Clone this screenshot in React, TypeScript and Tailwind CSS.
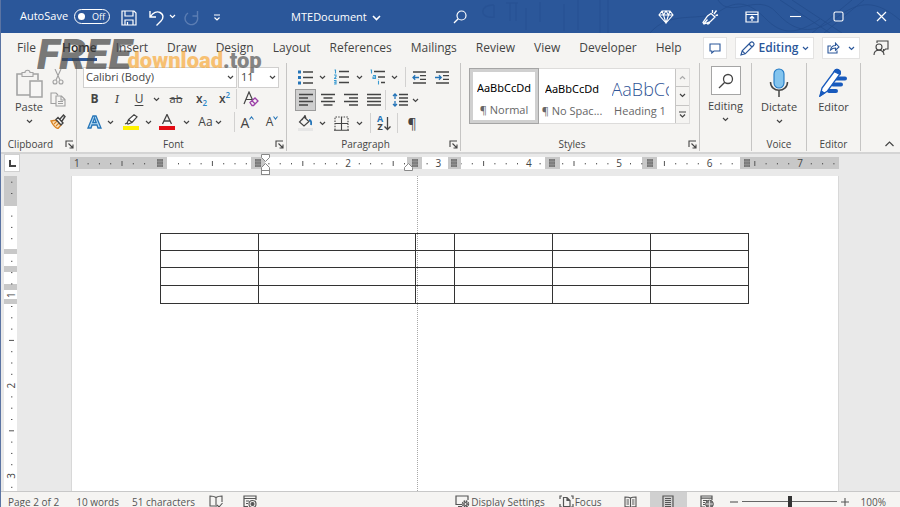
import type { ReactNode } from 'react';
import clsx from 'clsx';

const TABS = [
  'File', 'Home', 'Insert', 'Draw', 'Design', 'Layout', 'References',
  'Mailings', 'Review', 'View', 'Developer', 'Help',
];

const STYLES = [
  { sample: 'AaBbCcDd', name: '¶ Normal', selected: true },
  { sample: 'AaBbCcDd', name: '¶ No Spac...' },
  { sample: 'AaBbCc', name: 'Heading 1', heading: true },
];

const COLUMN_WIDTHS = [98, 157, 39, 98, 98, 98];
const ROW_HEIGHTS = [17, 17, 18, 18];

const INCH = 90.4;

interface IconProps {
  w: number;
  h: number;
  children: ReactNode;
  className?: string;
}

function Icon({ w, h, children, className }: IconProps) {
  return (
    <svg
      width={w}
      height={h}
      viewBox={`0 0 ${w} ${h}`}
      fill="none"
      stroke="currentColor"
      strokeWidth={1.1}
      className={clsx('shrink-0', className)}
      aria-hidden="true"
    >
      {children}
    </svg>
  );
}

function Chevron({ className }: { className?: string }) {
  return (
    <Icon w={7} h={5} className={className}>
      <path d="M1 1l2.500 2.500L6 1" strokeWidth={1.2} />
    </Icon>
  );
}

interface ToolProps {
  label: string;
  className: string;
  children: ReactNode;
}

function Tool({ label, className, children }: ToolProps) {
  return (
    <button
      type="button"
      aria-label={label}
      className={clsx('flex h-[22px] shrink-0 items-center justify-center', className)}
    >
      {children}
    </button>
  );
}

function Divider() {
  return <div className="h-5 w-px shrink-0 bg-[#d2d1d0]" />;
}

interface GroupProps {
  label: string;
  className: string;
  launcher?: boolean;
  children: ReactNode;
}

function Group({ label, className, launcher, children }: GroupProps) {
  return (
    <section
      aria-label={label || 'Editing'}
      className={clsx('flex shrink-0 flex-col border-r border-[#c6c5c4]', className)}
    >
      <div className="h-[74px]">{children}</div>
      <div
        className={clsx(
          'relative flex h-[14px] items-center justify-center text-[10px] leading-[14px]',
          launcher && 'pr-4',
        )}
      >
        {label}
        {launcher && (
          <button type="button" aria-label={`${label} settings`} className="absolute right-[2px]">
            <Icon w={9} h={9}>
              <path d="M1 7V1h7M3.500 3.500L8 8M8 4.500V8H4.500" />
            </Icon>
          </button>
        )}
      </div>
    </section>
  );
}

function TitleBar() {
  return (
    <header className="relative flex h-[33px] shrink-0 items-center overflow-hidden bg-[#2b579a] text-[11px] text-white">
      <svg className="absolute right-0 top-0 h-full w-[420px]" viewBox="0 0 420 33" fill="none" stroke="#234c8c" strokeWidth="2" aria-hidden="true">
        <path d="M14 5c-14-1-16 14 0 12V5M26 3h12M30 3v18M36 3v18M46 8v22M60 2v20M84 4v27M98 0v30M120 0v33M128 0v33" strokeWidth="1.500" opacity=".4" />
        <path d="M238 0c12 20 40-8 58 12s36 24 60 6 40-18 64 2M170 33c20-24 52-10 70-22s30-8 46 8 30 16 54 0M300 0l50 33M312 0l50 33M372 0l-40 33M384 0l-40 33" strokeWidth="1" opacity=".8" />
      </svg>
      <label className="relative ml-[19px] flex items-center gap-[6px]">
        AutoSave
        <input type="checkbox" className="peer sr-only" />
        <span className="flex h-[15px] w-9 items-center gap-[7px] rounded-full border border-white pl-[3px] text-[9px]">
          <span className="size-[7px] rounded-full bg-white" />
          Off
        </span>
      </label>
      <button type="button" aria-label="Save" className="relative ml-[11px] mt-[2px]">
        <Icon w={16} h={16}>
          <path d="M1 1h12l2 2v12H1zM4 1v5h8V1M4 15v-5h8v5M6.500 12v3" strokeWidth={1.2} />
        </Icon>
      </button>
      <button type="button" aria-label="Undo" className="relative ml-3 mt-[2px]">
        <Icon w={15} h={16}>
          <path d="M1 1v6h6M1.500 6.500C4 2.500 8 1 11 2.500c4 2 3.500 6 1 8.500l-4.500 4.500" strokeWidth={1.4} />
        </Icon>
      </button>
      <button type="button" aria-label="Undo history" className="relative ml-[5px]">
        <Chevron />
      </button>
      <button type="button" aria-label="Redo" disabled className="relative ml-2 mt-[2px] text-[#5b7db3]">
        <Icon w={16} h={16}>
          <path d="M13.500 1v5h-5M13 5.500A6.300 6.300 0 1 1 4 3" strokeWidth={1.4} />
        </Icon>
      </button>
      <button type="button" aria-label="Customize Quick Access Toolbar" className="relative ml-[13px] mt-[2px]">
        <Icon w={8} h={8}>
          <path d="M1 1h6M1.500 3.500L4 6l2.500-2.500" strokeWidth={1.2} />
        </Icon>
      </button>
      <button type="button" className="relative ml-[70px] mt-[2px] flex items-center gap-[5px]">
        MTEDocument
        <Icon w={9} h={6}>
          <path d="M1 1l3.500 3.500L8 1" strokeWidth={1.6} />
        </Icon>
      </button>
      <button type="button" aria-label="Search" className="relative ml-[72px]">
        <Icon w={14} h={14}>
          <circle cx="8.500" cy="5.500" r="4.500" strokeWidth={1.2} />
          <path d="M5.200 8.800L1 13" strokeWidth={1.3} />
        </Icon>
      </button>
      <div className="relative ml-auto flex items-center pr-[13px]">
        <button type="button" aria-label="Premium">
          <Icon w={16} h={14}>
            <path d="M4 1h8l3 4-7 8-7-8zM1 5h14M4 1l1.500 4L8 13l2.500-8L12 1M5.500 5L8 1l2.500 4" />
          </Icon>
        </button>
        <button type="button" aria-label="Coming soon" className="ml-7">
          <Icon w={17} h={16}>
            <path d="M9 4.500l4 3.500-4.500 4.500L2 15l-1-1.500L5.500 7zM2 14.500l3.500-4M5 14c0 1.500 2.500 1.500 3-1.500M10.500 4V1M12 5l2.500-3.500M13.500 6.500L16 6" strokeWidth={1.3} />
          </Icon>
        </button>
        <button type="button" aria-label="Ribbon display options" className="ml-[26px]">
          <Icon w={14} h={12}>
            <path d="M1 1h12v10H1zM1 3.500h12M7 10V5.500M4.800 7.500L7 5.300l2.200 2.200" strokeWidth={1.2} />
          </Icon>
        </button>
        <button type="button" aria-label="Minimize" className="ml-[31px]">
          <Icon w={11} h={11}>
            <path d="M0 5.500h11" />
          </Icon>
        </button>
        <button type="button" aria-label="Maximize" className="ml-8">
          <Icon w={11} h={11}>
            <rect x="1" y="1" width="9" height="9" rx="1.500" />
          </Icon>
        </button>
        <button type="button" aria-label="Close" className="ml-8">
          <Icon w={11} h={11}>
            <path d="M1 1l9 9M10 1l-9 9" strokeWidth={1.2} />
          </Icon>
        </button>
      </div>
    </header>
  );
}

function TabRow() {
  return (
    <div className="flex h-[30px] shrink-0 items-center">
      <nav className="flex pl-[7px] text-[12px]">
        {TABS.map((tab) => (
          <a
            key={tab}
            href={`#${tab.toLowerCase()}`}
            className={clsx('flex flex-col pt-[3px] pr-[10px] pl-[9px]', tab === 'File' && 'mr-[7px]')}
          >
            <span
              className={clsx(
                'border-b-3 leading-[20px]',
                tab === 'Home' ? 'border-[#2b579a] font-semibold text-[#262626]' : 'border-transparent',
              )}
            >
              {tab}
            </span>
          </a>
        ))}
      </nav>
      <div className="ml-auto flex items-center pr-[11px] text-[#2b579a]">
        <button type="button" aria-label="Comments" className="flex h-[22px] w-6 items-center justify-center border border-[#e4e3e2] bg-white">
          <Icon w={12} h={11}>
            <path d="M1 1h10v7H5L2.800 10V8H1z" />
          </Icon>
        </button>
        <button type="button" className="ml-2 flex h-[22px] w-[79px] items-center justify-center gap-1 border border-[#e4e3e2] bg-white text-[12px] font-semibold">
          <Icon w={15} h={15}>
            <path d="M1 14l1.200-4.200L10.500 1.500c2-1.500 4.500 1 3 3L5.200 12.800zM9 3l3 3M2.200 9.800l3 3" strokeWidth={1.2} />
          </Icon>
          Editing
          <Chevron />
        </button>
        <button type="button" aria-label="Share" className="ml-2 flex h-[22px] w-[38px] items-center justify-center gap-2 border border-[#e4e3e2] bg-white">
          <Icon w={13} h={12}>
            <path d="M4 4H1v7h9V8.500M3.500 8c.500-3 2.500-4.500 5-4.500V1.200L12 5 8.500 8.200V6C6.500 6 5 6.500 3.500 8z" />
          </Icon>
          <Chevron />
        </button>
        <button type="button" aria-label="Account" className="ml-[13px] text-[#444]">
          <Icon w={16} h={16}>
            <circle cx="6" cy="7" r="3" />
            <path d="M1 15c0-3 2-4.800 5-4.800S11 12 11 15M4 3V1h11v8h-2.500L10.500 11V9" />
          </Icon>
        </button>
      </div>
    </div>
  );
}

function ClipboardGroup() {
  return (
    <Group label="Clipboard" launcher className="w-[76px]">
      <div className="flex justify-between pl-[14px] pr-2">
        <button type="button" className="flex w-7 flex-col items-center pt-[6px] text-[11px] leading-[18px]">
          <Icon w={27} h={29} className="text-[#a3a3a3]">
            <path d="M14 26H1V5h6M17 5h5v6" strokeWidth={1.6} />
            <path d="M6 3.500h3c0-3 5-3 5 0h3v4H6z" fill="#f1f0ef" />
            <rect x="14" y="12" width="12" height="16" fill="#f7f6f5" strokeWidth={1.5} />
          </Icon>
          Paste
          <Chevron className="mt-[3px]" />
        </button>
        <div className="flex flex-col items-center pt-[3px]">
          <Tool label="Cut" className="w-5">
            <Icon w={12} h={16} className="text-[#a0a0a0]">
              <path d="M3 0l5 11M9 0L4 11" />
              <circle cx="3" cy="13" r="2" />
              <circle cx="9" cy="13" r="2" />
            </Icon>
          </Tool>
          <Tool label="Copy" className="w-5">
            <Icon w={16} h={15} className="text-[#a0a0a0]">
              <path d="M6 11.500H1V1h5l2 2M6 4h5.500L15 7.500V14H6zM11 4v4h4M8 9.500h5M8 11.500h5" />
            </Icon>
          </Tool>
          <Tool label="Format Painter" className="w-5">
            <Icon w={16} h={15}>
              <path d="M1 7l6-1 4 5-3 3.500C5 14 3 11 1 7z" fill="#fce4c0" stroke="#d98324" strokeWidth={1.4} />
              <path d="M4 10l3-3M6 12l3-3" stroke="#d98324" />
              <path d="M6 5.500l2-2 5 5.500-2 2zM10 5l3.500-4L15 2.500 12 7" fill="#fff" strokeWidth={1.4} />
            </Icon>
          </Tool>
        </div>
      </div>
    </Group>
  );
}

function FontGroup() {
  return (
    <Group label="Font" launcher className="w-[210px]">
      <div className="flex flex-col pl-[6px] pt-1">
        <div className="flex h-[21px] gap-px">
          <button type="button" aria-label="Font name" className="flex h-[21px] w-[154px] items-center justify-between border border-[#d0cfce] bg-white px-[2px] text-[11px]">
            Calibri (Body)
            <Chevron />
          </button>
          <button type="button" aria-label="Font size" className="flex h-[21px] w-[41px] items-center justify-between border border-[#d0cfce] bg-white px-[2px] text-[11px]">
            11
            <Chevron />
          </button>
        </div>
        <div className="flex items-center text-[12px]">
          <Tool label="Bold" className="w-[23px] font-bold">B</Tool>
          <Tool label="Italic" className="w-[22px] font-serif text-[13px] italic">I</Tool>
          <Tool label="Underline" className="w-[22px] underline underline-offset-2">U</Tool>
          <Tool label="Underline style" className="w-3"><Chevron /></Tool>
          <Tool label="Strikethrough" className="w-7 text-[11px] line-through">ab</Tool>
          <Tool label="Subscript" className="w-[23px] font-semibold">
            x<span className="mt-2 text-[8px] leading-[8px] text-[#2b88c8]">2</span>
          </Tool>
          <Tool label="Superscript" className="w-[23px] font-semibold">
            x<span className="mb-2 text-[8px] leading-[8px] text-[#2b88c8]">2</span>
          </Tool>
          <Divider />
          <Tool label="Clear formatting" className="w-7">
            <Icon w={16} h={16}>
              <path d="M1 13L6 1l4 9M3 8.500h6" strokeWidth={1.2} />
              <path d="M7 11.500L12 7l3 3-4.500 4.500H9zM9 9.700l3 3" stroke="#9b3fa8" strokeWidth={1.3} fill="#f5f4f2" />
            </Icon>
          </Tool>
        </div>
        <div className="flex items-center pt-px">
          <Tool label="Text effects" className="w-[23px]">
            <Icon w={15} h={14}>
              <path d="M1 13L6 1h3l5 12h-3l-1-3H5l-1 3zM5.800 7.500h3.400L7.500 3z" stroke="#2474b8" strokeWidth={1.3} fill="#b9dcf3" />
            </Icon>
          </Tool>
          <Tool label="Text effects options" className="w-2"><Chevron /></Tool>
          <Tool label="Highlight color" className="w-[34px]">
            <Icon w={16} h={16}>
              <path d="M4 9.500l1.500-4L11 .800l3 2L9 8.500 5 10zM5.500 5.500L9 8.500" fill="#fff" strokeWidth={1.200} />
              <path d="M2 10l2-1" />
              <rect x="0" y="12" width="16" height="4" fill="#fff200" stroke="none" />
            </Icon>
          </Tool>
          <Tool label="Highlight options" className="w-0"><Chevron /></Tool>
          <Tool label="Font color" className="w-[38px]">
            <Icon w={16} h={16}>
              <path d="M3.500 10L8 .500l4.500 9.500M5 7h6" strokeWidth={1.3} />
              <rect x="0" y="12" width="16" height="4" fill="#e30b13" stroke="none" />
            </Icon>
          </Tool>
          <Tool label="Font color options" className="w-0"><Chevron /></Tool>
          <Tool label="Change case" className="w-12 gap-[2px] text-[12px]">
            Aa <Chevron />
          </Tool>
          <Divider />
          <Tool label="Grow font" className="w-[25px] text-[14px]">
            A
            <Icon w={5} h={4} className="mb-2 text-[#2474b8]">
              <path d="M.500 3.500l2-2.500 2 2.500" />
            </Icon>
          </Tool>
          <Tool label="Shrink font" className="w-6 text-[12px]">
            A
            <Icon w={5} h={4} className="mb-2 text-[#2474b8]">
              <path d="M.500 .500l2 2.500 2-2.500" />
            </Icon>
          </Tool>
        </div>
      </div>
    </Group>
  );
}

function ParagraphGroup() {
  return (
    <Group label="Paragraph" launcher className="w-[174px]">
      <div className="flex flex-col gap-px pl-2 pt-[3px] text-[#444]">
        <div className="flex items-center">
          <Tool label="Bullets" className="w-[21px]">
            <Icon w={15} h={15}>
              <path d="M5 2h10M5 7.500h10M5 13h10" strokeWidth={1.3} />
              <path d="M0 2h3M0 7.500h3M0 13h3" stroke="#2474b8" strokeWidth={3} />
            </Icon>
          </Tool>
          <Tool label="Bullet library" className="w-3"><Chevron /></Tool>
          <Tool label="Numbering" className="w-[26px]">
            <Icon w={15} h={16}>
              <path d="M5 2.500h10M5 8h10M5 13.500h10" strokeWidth={1.3} />
              <path d="M.500 1h1v3.500M0 6h2v1.500L.500 9.500H2.500M0 11.500h2v3.500H0M0 13.200h2" stroke="#3a9bd2" />
            </Icon>
          </Tool>
          <Tool label="Numbering library" className="w-[10px]"><Chevron /></Tool>
          <Tool label="Multilevel list" className="w-[26px]">
            <Icon w={15} h={16}>
              <path d="M4 2.500h11M8 8h7M11 13.500h4" strokeWidth={1.3} />
              <path d="M.500 1h1v3.500M3 6.500h2.500v3H3V8h2.500M8.500 12v3.500M8.500 10.500v.800" stroke="#3a9bd2" />
            </Icon>
          </Tool>
          <Tool label="List library" className="w-2"><Chevron /></Tool>
          <div className="w-[7px]" />
          <Divider />
          <Tool label="Decrease indent" className="w-[26px]">
            <Icon w={15} h={13}>
              <path d="M1 1h13M8 4.700h6M8 8.300h6M1 12h13" strokeWidth={1.3} />
              <path d="M7 6.500H1M3.200 4.200L1 6.500l2.200 2.300" stroke="#2474b8" strokeWidth={1.300} />
            </Icon>
          </Tool>
          <Tool label="Increase indent" className="w-5">
            <Icon w={15} h={13}>
              <path d="M1 1h13M8 4.700h6M8 8.300h6M1 12h13" strokeWidth={1.3} />
              <path d="M0 6.500h6M4 4.200l2.200 2.300L4 8.800" stroke="#2474b8" strokeWidth={1.300} />
            </Icon>
          </Tool>
        </div>
        <div className="flex items-center">
          <Tool label="Align left" className="w-[21px] border border-[#9b9b9b] bg-[#cfcfcf]">
            <Icon w={14} h={14}>
              <path d="M0 1.500h14M0 5h9M0 8.500h14M0 12h9" strokeWidth={1.4} />
            </Icon>
          </Tool>
          <Tool label="Center" className="w-[23px]">
            <Icon w={14} h={14}>
              <path d="M0 1.500h14M2.500 5h9M0 8.500h14M2.500 12h9" strokeWidth={1.3} />
            </Icon>
          </Tool>
          <Tool label="Align right" className="w-[23px]">
            <Icon w={14} h={14}>
              <path d="M0 1.500h14M5 5h9M0 8.500h14M5 12h9" strokeWidth={1.3} />
            </Icon>
          </Tool>
          <Tool label="Justify" className="w-[23px]">
            <Icon w={14} h={14}>
              <path d="M0 1.500h14M0 5h14M0 8.500h14M0 12h14" strokeWidth={1.3} />
            </Icon>
          </Tool>
          <Divider />
          <Tool label="Line spacing" className="w-[35px] gap-1 pl-1">
            <Icon w={16} h={14}>
              <path d="M7 1.500h9M7 5h9M7 8.500h9M7 12h9" strokeWidth={1.3} />
              <path d="M3 1v5M1 3l2-2 2 2M3 8v5M1 11l2 2 2-2" stroke="#2474b8" strokeWidth={1.300} />
            </Icon>
            <Chevron />
          </Tool>
        </div>
        <div className="flex items-center">
          <Tool label="Shading" className="w-[21px]">
            <Icon w={15} h={16}>
              <path d="M6 2l5 4.500L6 11 1.500 7zM4 5l3-4.500 1 3" strokeWidth={1.2} />
              <path d="M11 5c2 0 2.500 2 2 5" stroke="#2474b8" strokeWidth={1.800} />
              <rect x="0" y="13" width="15" height="3" fill="#e6e6e6" stroke="none" />
            </Icon>
          </Tool>
          <Tool label="Shading color" className="w-3"><Chevron /></Tool>
          <Tool label="Borders" className="w-[26px]">
            <Icon w={15} h={15}>
              <path d="M1 14V1h13v13" strokeDasharray="1.500 1.200" />
              <path d="M0 14.300h15M7.500 1v13M1 7.500h13" />
            </Icon>
          </Tool>
          <Tool label="Border options" className="w-[10px]"><Chevron /></Tool>
          <div className="w-[6px]" />
          <Divider />
          <Tool label="Sort" className="w-[26px]">
            <span className="flex flex-col text-[9px] leading-[8px] font-bold">
              <span className="text-[#2474b8]">A</span>
              <span>Z</span>
            </span>
            <Icon w={8} h={15}>
              <path d="M4.500 1v12.500M1.500 10.500l3 3 3-3" strokeWidth={1.300} />
            </Icon>
          </Tool>
          <Divider />
          <Tool label="Show paragraph marks" className="w-7 text-[14px]">¶</Tool>
        </div>
      </div>
    </Group>
  );
}

function StylesGroup() {
  return (
    <Group label="Styles" launcher className="w-[239px]">
      <div className="pl-[8px] pt-[5px]">
        <div className="flex h-14 w-[221px] border border-[#dddcdb] bg-white">
          {STYLES.map((style) => (
            <button
              key={style.name}
              type="button"
              className={clsx(
                'flex w-[68px] flex-col items-center justify-end overflow-hidden',
                style.selected && 'border-3 border-[#d0d0d0] outline outline-[#a5a5a5]',
              )}
            >
              <span
                className={clsx(
                  'flex h-[24px] items-center overflow-hidden whitespace-nowrap',
                  style.heading
                    ? 'w-[57px] text-[18px] leading-[24px] font-light text-[#2f5496]'
                    : "justify-center font-['Noto_Sans'] text-[11px] text-black",
                )}
              >
                {style.sample}
              </span>
              <span className={clsx('text-[11px] leading-[20px] whitespace-nowrap text-[#666]', !style.selected && 'mb-[2px]')}>
                {style.name}
              </span>
            </button>
          ))}
          <div className="ml-auto flex w-[14px] flex-col divide-y divide-[#c6c5c4] border-l border-[#c6c5c4] bg-[#f5f4f2]">
            <button type="button" aria-label="Previous styles" className="flex flex-1 items-center justify-center text-[#aaa]">
              <Chevron className="rotate-180" />
            </button>
            <button type="button" aria-label="Next styles" className="flex flex-1 items-center justify-center">
              <Chevron />
            </button>
            <button type="button" aria-label="More styles" className="flex flex-1 items-center justify-center">
              <Icon w={7} h={7}>
                <path d="M0 1h7M1 3.500l2.500 2.500L6 3.500" strokeWidth={1.200} />
              </Icon>
            </button>
          </div>
        </div>
      </div>
    </Group>
  );
}

function Ribbon() {
  return (
    <div className="flex h-[89px] shrink-0 overflow-hidden pb-px">
      <ClipboardGroup />
      <FontGroup />
      <ParagraphGroup />
      <StylesGroup />
      <Group label="" className="w-[52px]">
        <button type="button" className="flex w-full flex-col items-center pt-[3px] text-[11px] leading-[22px]">
          <span className="flex h-[29px] w-[30px] items-center justify-center border border-[#a5a5a5] bg-white">
            <Icon w={16} h={16}>
              <circle cx="10" cy="6" r="4.500" strokeWidth={1.300} />
              <path d="M6.800 9.200L1 15" strokeWidth={1.300} />
            </Icon>
          </span>
          Editing
          <Chevron />
        </button>
      </Group>
      <Group label="Voice" className="w-[55px]">
        <button type="button" className="flex w-full flex-col items-center pt-[5px] text-[11px] leading-[20px]">
          <Icon w={20} h={29}>
            <rect x="5" y="1" width="10" height="19" rx="5" fill="#83c4ee" stroke="#1f78c4" />
            <path d="M1.500 14c0 11 17 11 17 0M10 22.500V29" strokeWidth={1.500} />
          </Icon>
          Dictate
          <Chevron className="mt-[2px]" />
        </button>
      </Group>
      <Group label="Editor" className="w-[54px]">
        <button type="button" className="flex w-full flex-col items-center pt-[5px] text-[11px] leading-[20px]">
          <Icon w={29} h={29}>
            <path d="M17 10.500h9M14 16.500h8M10 23h7" stroke="#185abd" strokeWidth={4} strokeLinecap="round" />
            <path d="M1 28l2-8L16 2.500c2-2.500 6.500 0 5 3.500L8.500 23z" fill="#fff" stroke="#185abd" strokeWidth={1.300} />
            <path d="M15 3.500C17-1 23 2 21 6.500zM1 28l1.500-5 3 2z" fill="#185abd" stroke="#185abd" />
          </Icon>
          Editor
        </button>
      </Group>
      <div className="flex flex-1 items-end justify-end pr-[6px] pb-1">
        <button type="button" aria-label="Collapse the ribbon">
          <Icon w={9} h={6}>
            <path d="M.500 5l4-4 4 4" strokeWidth={1.200} />
          </Icon>
        </button>
      </div>
    </div>
  );
}

/* Ruler coordinates run from the left end of the grey margin strip. */
function HorizontalRuler() {
  const zero = 97.2;
  const white = [[97, 84], [194, 143], [352, 26], [391, 84], [490, 82], [587, 83]];
  const stops = [87, 185, 342, 381, 479, 577, 674];
  const ticks = Array.from({ length: 67 }, (_, i) => i - 7)
    .filter((i) => i % 8 !== 0)
    .map((i) => ({ x: zero + (i * INCH) / 8, half: i % 4 === 0 }));
  const numbers = [-1, 2, 3, 4, 5, 6, 7];

  return (
    <svg className="block w-full" height="24" viewBox="0 1 769 24" preserveAspectRatio="xMinYMin slice" aria-label="Horizontal ruler">
      <rect x="0" y="4" width="769" height="12" fill="#c8c8c8" />
      {white.map(([x, w]) => (
        <rect key={x} x={x} y="4" width={w} height="12" fill="#fff" />
      ))}
      {ticks.map(({ x, half }) => (
        <rect key={x} x={x - 0.5} y={half ? 8 : 10} width="1" height={half ? 5 : 1.4} fill="#555" />
      ))}
      {numbers.map((n) => (
        <text key={n} x={zero + n * INCH} y="14" textAnchor="middle" fontSize="10" fill="#444">
          {Math.abs(n)}
        </text>
      ))}
      {stops.map((x) => (
        <g key={x}>
          <rect x={x - 3} y="4" width="13" height="12" fill="#c8c8c8" />
          <rect x={x} y="6" width="6" height="8" fill="#777" />
          <path d={`M${x + 2} 6v8M${x + 4} 6v8M${x} 8.500h6M${x} 11.500h6`} stroke="#999" strokeWidth=".600" />
        </g>
      ))}
      <g fill="#fff" stroke="#888">
        <path d="M191.500 1.500h8v3l-4 4-4-4zM191.500 17.500v-3l4-4 4 4v3z" />
        <rect x="191.500" y="17.500" width="8" height="4" />
        <path d="M334.500 17.500v-3l4-4 4 4v3z" />
      </g>
    </svg>
  );
}

function VerticalRuler() {
  const zero = 28.8;
  const grey = [[0, 30], [73, 5], [90, 6], [108, 6], [123, 5]];
  const ticks = Array.from({ length: 28 }, (_, i) => i - 2)
    .filter((i) => i % 8 !== 0 && i !== 4)
    .map((i) => ({ y: zero + (i * INCH) / 8, half: i % 4 === 0 }));

  return (
    <svg className="block" width="13" height="100%" aria-label="Vertical ruler">
      <rect width="13" height="100%" fill="#fff" />
      {grey.map(([y, h]) => (
        <rect key={y} x="0" y={y} width="13" height={h} fill="#c8c8c8" />
      ))}
      {ticks.map(({ y, half }) => (
        <rect key={y} x={half ? 5 : 7} y={y - 0.5} width={half ? 5 : 1.4} height="1" fill="#555" />
      ))}
      {[1, 2, 3].map((n) => (
        <text
          key={n}
          transform={`translate(11 ${zero + n * INCH}) rotate(-90)`}
          textAnchor="middle"
          fontSize="10"
          fill="#444"
        >
          {n}
        </text>
      ))}
    </svg>
  );
}

function Workspace() {
  return (
    <main className="flex min-h-0 flex-1 border-t-2 border-[#d4d4d4] bg-[#e9e9e9]">
      <div className="flex w-[17px] shrink-0 flex-col pl-[3px]">
        <button type="button" aria-label="Tab selector" className="mb-1 flex h-[18px] w-4 shrink-0 items-center justify-center border border-[#d0d0d0] bg-white">
          <Icon w={7} h={7} className="text-[#444]">
            <path d="M1 0v6h6" strokeWidth={2} />
          </Icon>
        </button>
        <div className="min-h-0 flex-1">
          <VerticalRuler />
        </div>
      </div>
      <div className="mr-[61px] ml-[52px] flex min-w-0 flex-1 flex-col">
        <div className="h-[22px] shrink-0">
          <HorizontalRuler />
        </div>
        <article className="relative ml-px min-h-0 flex-1 border-r border-l border-[#d8d8d8] bg-white pt-[57px] pl-[88px]">
          <div className="absolute inset-y-0 left-[345px] border-l border-dotted border-[#a8a8a8]" />
          <table className="relative table-fixed border-collapse">
            <colgroup>
              {COLUMN_WIDTHS.map((width, i) => (
                <col key={i} style={{ width }} />
              ))}
            </colgroup>
            <tbody>
              {ROW_HEIGHTS.map((height, r) => (
                <tr key={r} style={{ height }}>
                  {COLUMN_WIDTHS.map((_, c) => (
                    <td key={c} className="border border-[#333] p-0" />
                  ))}
                </tr>
              ))}
            </tbody>
          </table>
        </article>
      </div>
    </main>
  );
}

function StatusBar() {
  return (
    <footer className="flex h-4 shrink-0 border-t border-[#c8c8c8] text-[10px] leading-[10px] text-[#555]">
      <div className="flex h-[19px] flex-1 items-center pl-[7px]">
        <span>Page 2 of 2</span>
        <span className="ml-[17px]">10 words</span>
        <span className="ml-[13px]">51 characters</span>
        <button type="button" aria-label="Proofing" className="ml-[14px]">
          <Icon w={14} h={13}>
            <path d="M7 2.500C5 1 3 1 1 1v10h5M7 2.500C9 1 11 1 13 1v6M7 2.500V12M8 10l2 2 3.500-4" strokeWidth={1.100} />
          </Icon>
        </button>
        <button type="button" aria-label="Record macro" className="ml-5">
          <Icon w={14} h={13}>
            <path d="M5 11.500H1V1h12v4M1 3.500h12M3 6h3M3 8.500h2" strokeWidth={1.200} />
            <circle cx="9.500" cy="9" r="3.500" />
            <circle cx="9.500" cy="9" r="1.500" fill="currentColor" />
          </Icon>
        </button>
        <button type="button" className="ml-auto flex items-center gap-px">
          <Icon w={15} h={13}>
            <path d="M7 9.500H1V1h12v4M3 11.500h4" strokeWidth={1.200} />
            <circle cx="10.500" cy="9" r="2.800" strokeWidth={1.800} strokeDasharray="1.500 .700" />
            <circle cx="10.500" cy="9" r="1.500" />
          </Icon>
          Display Settings
        </button>
        <button type="button" className="ml-[14px] flex items-center gap-px">
          <Icon w={15} h={13}>
            <path d="M1 4V1h2M12 1h2v3M1 9v3h2M14 9v3h-2M4.500 2.500H8L11 5.500v6H4.500zM8 2.500v3h3" strokeWidth={1.200} />
          </Icon>
          Focus
        </button>
        <button type="button" aria-label="Read mode" className="ml-[22px]">
          <Icon w={13} h={12}>
            <path d="M6.500 2C5 1 3 1 1 1v9.500c2 0 4 0 5.500 1 1.500-1 3.500-1 5.500-1V1c-2 0-4 0-5.500 1zv9.500M2.500 4H5M2.500 6H5M2.500 8H5M8 4h2.500M8 6h2.500M8 8h2.500" />
          </Icon>
        </button>
        <button type="button" aria-label="Print layout" className="ml-[13px] flex h-full w-[37px] items-center justify-center bg-[#d0d0d0]">
          <Icon w={12} h={13}>
            <path d="M1 1h10v12H1zM3 3.500h6M3 5.500h6M3 7.500h6M3 9.500h6M3 11.500h6" strokeWidth={1.200} />
          </Icon>
        </button>
        <button type="button" aria-label="Web layout" className="ml-[13px]">
          <Icon w={14} h={13}>
            <path d="M5 12H1V1h11v4M1 3.200h11M3 5.500h4M3 7.500h2M3 9.500h2" strokeWidth={1.200} />
            <circle cx="9.500" cy="9" r="3.700" fill="#777" />
            <path d="M9.500 5.500v7M6 9h7" stroke="#ddd" />
          </Icon>
        </button>
        <button type="button" aria-label="Zoom out" className="ml-4">
          <Icon w={8} h={8}><path d="M0 4h8" /></Icon>
        </button>
        <label className="relative ml-1 flex h-full w-[95px] items-center">
          <span className="h-px w-full bg-[#666]" />
          <span className="absolute left-[46px] h-[11px] w-1 bg-[#333]" />
          <input type="range" aria-label="Zoom" min={10} max={190} defaultValue={100} className="absolute inset-0 w-full opacity-0" />
        </label>
        <button type="button" aria-label="Zoom in" className="ml-1">
          <Icon w={8} h={8}><path d="M0 4h8M4 0v8" /></Icon>
        </button>
        <span className="mr-[14px] ml-3">100%</span>
      </div>
    </footer>
  );
}

function Watermark() {
  return (
    <div className="pointer-events-none absolute top-[39px] left-[36px] flex items-end font-[Roboto] font-black opacity-70">
      <span className="text-[42px] leading-[32px] text-[#444] italic">FREE</span>
      <span className="-ml-1 text-[22px] leading-[20px] text-[#f9ab3c]">download</span>
      <span className="text-[22px] leading-[20px] text-[#555]">.top</span>
    </div>
  );
}

export default function App() {
  return (
    <div className="relative flex h-screen flex-col overflow-hidden border-l border-[#5b74a3] bg-[#f5f4f2] font-['Open_Sans','Noto_Sans',sans-serif] text-[#444]">
      <TitleBar />
      <TabRow />
      <Ribbon />
      <Workspace />
      <StatusBar />
      <Watermark />
    </div>
  );
}
